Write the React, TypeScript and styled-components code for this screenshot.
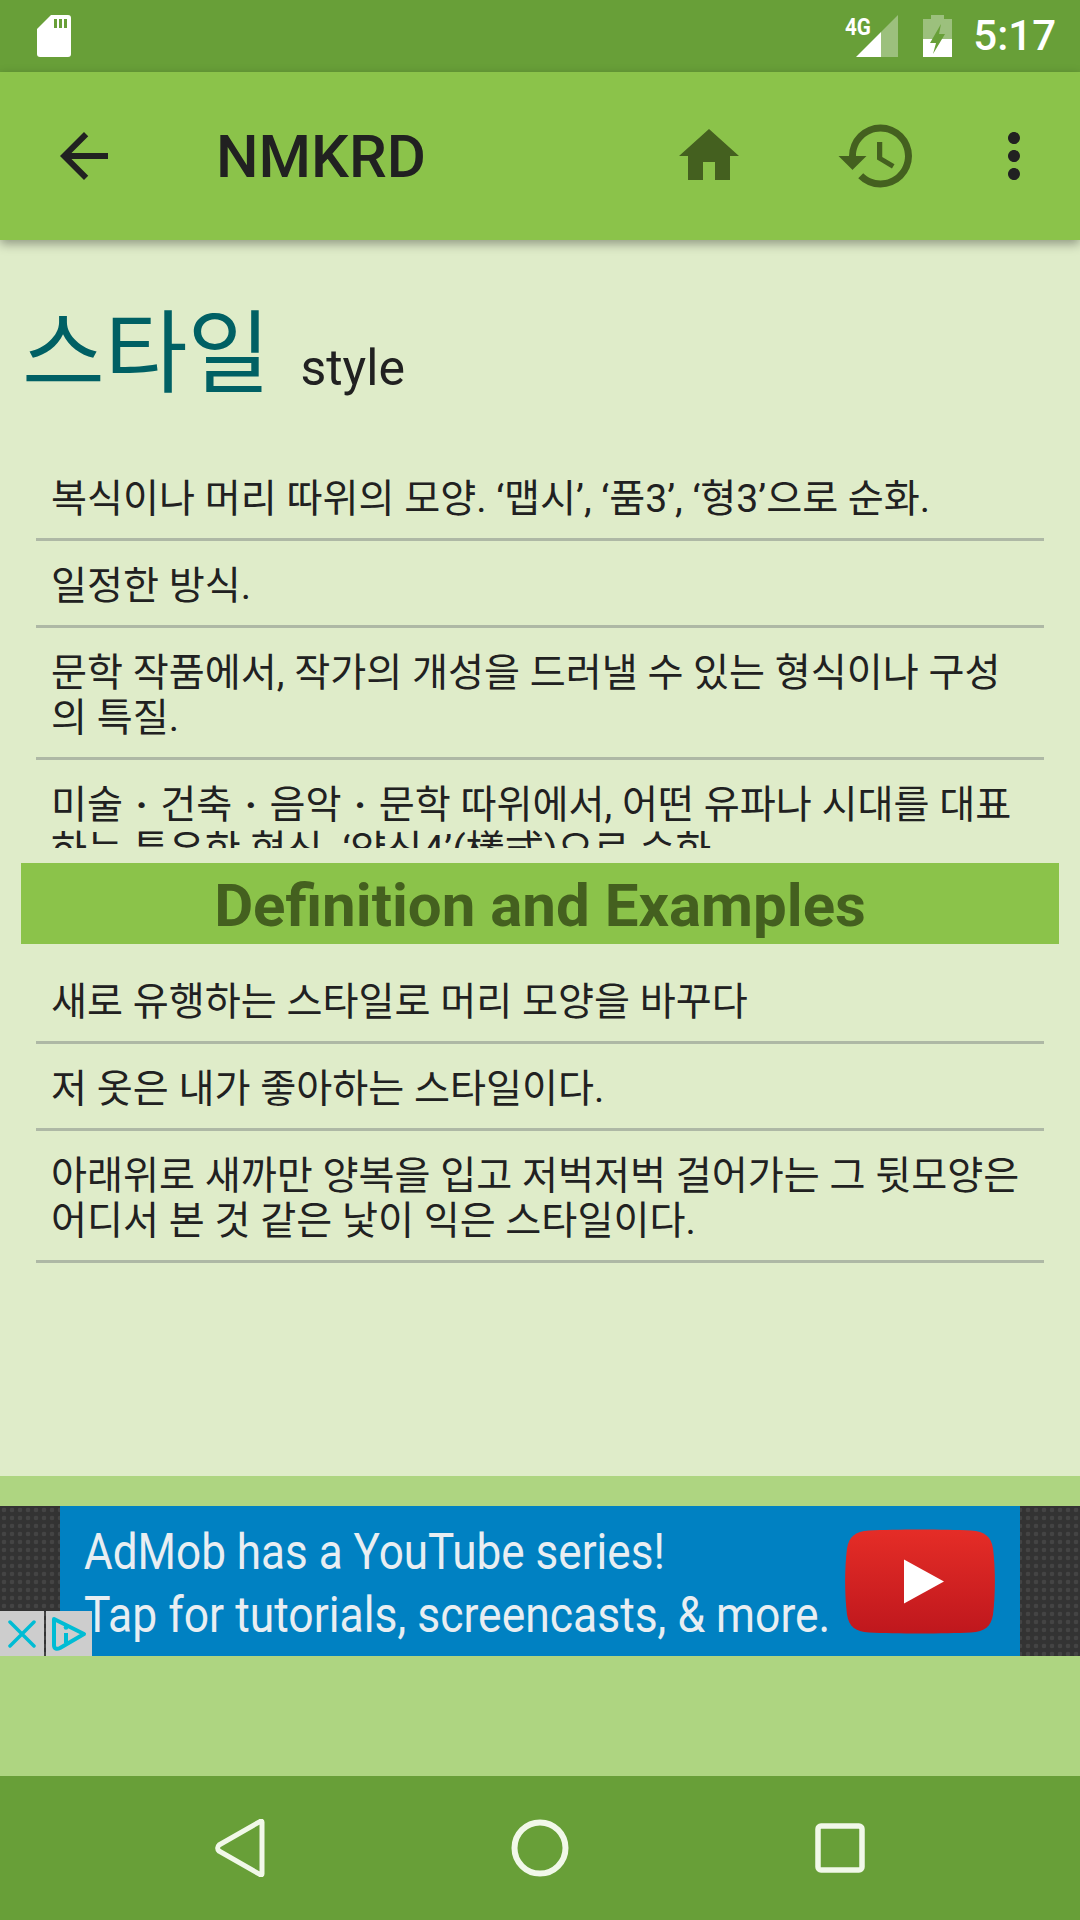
import React from "react";
import styled, { createGlobalStyle } from "styled-components";

const Global = createGlobalStyle`
  html, body { margin: 0; padding: 0; background: #dfecc9; }
  * { box-sizing: border-box; }
  body { font-family: Roboto, "Noto Sans CJK KR", sans-serif; }
`;
const Page = styled.div`
  width: 1080px; height: 1920px; display: flex; flex-direction: column; overflow: hidden;
`;
const StatusBar = styled.header`
  height: 72px; flex: none; background: #689f38; display: flex; align-items: center;
  justify-content: space-between; padding: 0 24px 0 36px;
`;
const StatusRight = styled.div`
  display: flex; align-items: center; gap: 25px;
`;
const SignalWrap = styled.div`
  position: relative; width: 42px; height: 42px;
  svg { display: block; }
`;
const NetLabel = styled.span`
  position: absolute; left: -11px; top: 0; color: #fff; font-size: 24px; font-weight: 700; line-height: 24px;
  transform: scaleX(0.86); transform-origin: left center;
`;
const Clock = styled.span`
  color: #fff; font-size: 42px; font-weight: 500; margin-left: -4px; line-height: 1;
`;
const Toolbar = styled.div`
  height: 168px; flex: none; background: #8bc34a; display: flex; align-items: center; padding-right: 13px;
  box-shadow: 0 4px 10px rgba(0,0,0,.35); position: relative; z-index: 1;
`;
const BackButton = styled.div`
  width: 168px; height: 168px; flex: none; display: flex; align-items: center; justify-content: center;
`;
const ToolbarTitle = styled.div`
  flex: 1; margin: 2px 0 0 48px; font-size: 60px; font-weight: 500; color: #212121; line-height: 1;
`;
const ToolIcon = styled.div<{ $w: number }>`
  width: ${(p) => p.$w}px; height: 168px; flex: none; display: flex; align-items: center; justify-content: center;
`;
const Content = styled.main`
  flex: 1; min-height: 0; background: #dfecc9; display: flex; flex-direction: column; padding: 54px 21px 0 21px;
`;
const Headword = styled.div`
  display: flex; align-items: baseline; height: 112px; padding-top: 5px; flex: none;
`;
const Word = styled.h1`
  margin: 0 0 0 1px; font-size: 90px; font-weight: 400; color: #006064; line-height: 112px;
  font-family: Roboto, "Noto Sans CJK KR", sans-serif;
`;
const Gloss = styled.span`
  margin-left: 30px; font-size: 50px; color: #212121; line-height: 112px;
`;
const Scroll = styled.div`
  height: 442px; flex: none; overflow: hidden; padding-top: 48px;
`;
const Item = styled.div`
  margin: 0 15px; padding: 23px 15px 16px; font-size: 39.15px; line-height: 45px; color: #212121;
  border-bottom: 3px solid #aeb8a5;
`;
const Dot = styled.span`
  padding: 0 3px; font-weight: 700;
`;
const Bar = styled.h2`
  margin: 15px 0 0; height: 81px; flex: none; background: #8bc34a; color: #44601f; font-size: 60px;
  font-weight: 700; text-align: center; line-height: 86px;
`;
const Examples = styled.div`
  padding-top: 13px;
`;
const AdStrip = styled.section`
  height: 300px; flex: none; background: #aed581; padding-top: 30px;
`;
const AdFrame = styled.div`
  position: relative; height: 150px; display: flex; background-color: #333;
  background-image: radial-gradient(circle at 4px 4px, #444 2px, transparent 2.6px);
  background-size: 8px 8px;
`;
const AdBody = styled.div`
  margin-left: 60px; width: 960px; background: #0081c2; position: relative; display: flex; align-items: center;
  justify-content: space-between; padding: 0 25px 0 24px;
`;
const AdText = styled.div`
  width: 750px; flex: none; color: #e8eef2; font-size: 50px; line-height: 63px; white-space: nowrap; margin-top: 5px;
`;
const AdLine = styled.div<{ $sx: number }>`
  transform: scaleX(${(p) => p.$sx}); transform-origin: left center;
`;
const PlayBadge = styled.svg`
  flex: none; width: 150px; height: 105px; margin-top: 1px;
`;
const Choices = styled.div`
  position: absolute; left: 0; bottom: 0; height: 45px; display: flex; gap: 2px; z-index: 1;
`;
const Choice = styled.div<{ $w: number }>`
  width: ${(p) => p.$w}px; height: 45px; background: #cdcdcd; display: flex; align-items: center; justify-content: center;
`;
const NavBar = styled.nav`
  height: 144px; flex: none; background: #689f38; display: flex; align-items: center; padding: 0 90px;
`;
const NavSlot = styled.div`
  flex: 1; display: flex; align-items: center; justify-content: center;
`;

const defs: React.ReactNode[] = [
  "복식이나 머리 따위의 모양. ‘맵시’, ‘품3’, ‘형3’으로 순화.",
  "일정한 방식.",
  "문학 작품에서, 작가의 개성을 드러낼 수 있는 형식이나 구성의 특질.",
  <>미술 <Dot>·</Dot> 건축 <Dot>·</Dot> 음악 <Dot>·</Dot> 문학 따위에서, 어떤 유파나 시대를 대표하는 특유한 형식. ‘양식4’(樣式)으로 순화.</>,
];
const examples = [
  "새로 유행하는 스타일로 머리 모양을 바꾸다",
  "저 옷은 내가 좋아하는 스타일이다.",
  "아래위로 새까만 양복을 입고 저벅저벅 걸어가는 그 뒷모양은 어디서 본 것 같은 낯이 익은 스타일이다.",
];

export default function App() {
  return (
    <Page>
      <Global />
      <StatusBar>
        <svg width="36" height="44" viewBox="0 0 36 44">
          <path d="M15 1h17a3 3 0 0 1 3 3v36a3 3 0 0 1-3 3H4a3 3 0 0 1-3-3V15z" fill="#fff" />
          <path d="M18 5h3v9h-3zM23 5h3v9h-3zM28 5h3v9h-3z" fill="#689f38" />
        </svg>
        <StatusRight>
          <SignalWrap>
            <NetLabel>4G</NetLabel>
            <svg width="42" height="42" viewBox="0 0 42 42">
              <path d="M42 0v42H25V17z" fill="#fff" opacity=".35" />
              <path d="M25 17v25H0z" fill="#fff" />
            </svg>
          </SignalWrap>
          <svg width="29" height="42" viewBox="0 0 29 42">
            <path d="M8 0h13v4h8v38H0V4h8z" fill="#fff" opacity=".35" />
            <path d="M0 24h29v18H0z" fill="#fff" />
            <path d="M18 9L7 28h6l-3 11 12-20h-6z" fill="#689f38" />
          </svg>
          <Clock>5:17</Clock>
        </StatusRight>
      </StatusBar>
      <Toolbar>
        <BackButton>
          <svg width="72" height="72" viewBox="0 0 24 24"><path d="M20 11H7.830l5.590-5.590L12 4l-8 8 8 8 1.410-1.410L7.830 13H20z" fill="#212121" /></svg>
        </BackButton>
        <ToolbarTitle>NMKRD</ToolbarTitle>
        <ToolIcon $w={168}>
          <svg width="72" height="72" viewBox="0 0 24 24"><path d="M10 20v-6h4v6h5v-8h3L12 3 2 12h3v8z" fill="#44601f" /></svg>
        </ToolIcon>
        <ToolIcon $w={168}>
          <svg width="84" height="84" viewBox="0 0 24 24"><path d="M13 3a9 9 0 0 0-9 9H1l3.890 3.890.07.140L9 12H6c0-3.870 3.130-7 7-7s7 3.130 7 7-3.130 7-7 7c-1.930 0-3.680-.79-4.940-2.060l-1.420 1.420A8.954 8.954 0 0 0 13 21a9 9 0 0 0 0-18zm-1 5v5l4.280 2.540.72-1.210-3.500-2.080V8H12z" fill="#44601f" /></svg>
        </ToolIcon>
        <ToolIcon $w={106}>
          <svg width="72" height="72" viewBox="0 0 24 24"><path d="M12 8c1.100 0 2-.9 2-2s-.9-2-2-2-2 .9-2 2 .9 2 2 2zm0 2c-1.100 0-2 .9-2 2s.9 2 2 2 2-.9 2-2-.9-2-2-2zm0 6c-1.100 0-2 .9-2 2s.9 2 2 2 2-.9 2-2-.9-2-2-2z" fill="#212121" /></svg>
        </ToolIcon>
      </Toolbar>
      <Content>
        <Headword>
          <Word>스타일</Word>
          <Gloss>style</Gloss>
        </Headword>
        <Scroll>
          {defs.map((d, i) => <Item key={i}>{d}</Item>)}
        </Scroll>
        <Bar>Definition and Examples</Bar>
        <Examples>
          {examples.map((d) => <Item key={d}>{d}</Item>)}
        </Examples>
      </Content>
      <AdStrip>
        <AdFrame>
          <AdBody>
            <AdText>
              <AdLine $sx={0.881}>AdMob has a YouTube series!</AdLine>
              <AdLine $sx={0.889}>Tap for tutorials, screencasts, &amp; more.</AdLine>
            </AdText>
            <PlayBadge viewBox="0 0 150 104">
              <defs>
                <linearGradient id="yt" x1="0" y1="0" x2="0" y2="1">
                  <stop offset="0" stopColor="#e52d27" />
                  <stop offset="1" stopColor="#bf171d" />
                </linearGradient>
              </defs>
              <path d="M24 1C50-.3 100-.3 126 1c14 1 20 6 22 18 2.500 20 2.500 46 0 66-2 12-8 17-22 18-26 1.300-76 1.300-102 0C10 102 4 97 2 85-.5 65-.5 39 2 19 4 7 10 2 24 1z" fill="url(#yt)" />
              <path d="M59 30l40 22-40 22z" fill="#fff" />
            </PlayBadge>
          </AdBody>
          <Choices>
            <Choice $w={44}>
              <svg width="28" height="28" viewBox="0 0 28 28"><path d="M2 2l24 24M26 2L2 26" stroke="#00bcd4" strokeWidth="3.500" strokeLinecap="round" /></svg>
            </Choice>
            <Choice $w={46}>
              <svg width="36" height="36" viewBox="0 0 36 36"><path d="M3 3l30 15L9 32c-3 1.500-6 1-6-3z" fill="none" stroke="#00bcd4" strokeWidth="4" strokeLinejoin="round" /><path d="M15 17v10" stroke="#00bcd4" strokeWidth="4" /><circle cx="15" cy="11.500" r="2.300" fill="#00bcd4" /></svg>
            </Choice>
          </Choices>
        </AdFrame>
      </AdStrip>
      <NavBar>
        <NavSlot>
          <svg width="54" height="58" viewBox="0 0 54 58"><path d="M49 3v52a1 1 0 0 1-1.700.7L6 32a4 4 0 0 1 0-6L47.300 2.300A1 1 0 0 1 49 3z" fill="none" stroke="#f1f8e9" strokeWidth="5" strokeLinejoin="round" /></svg>
        </NavSlot>
        <NavSlot>
          <svg width="58" height="58" viewBox="0 0 58 58"><circle cx="29" cy="29" r="25.500" fill="none" stroke="#f1f8e9" strokeWidth="6" /></svg>
        </NavSlot>
        <NavSlot>
          <svg width="50" height="50" viewBox="0 0 50 50"><rect x="3" y="3" width="44" height="44" rx="3" fill="none" stroke="#f1f8e9" strokeWidth="5.500" /></svg>
        </NavSlot>
      </NavBar>
    </Page>
  );
}
